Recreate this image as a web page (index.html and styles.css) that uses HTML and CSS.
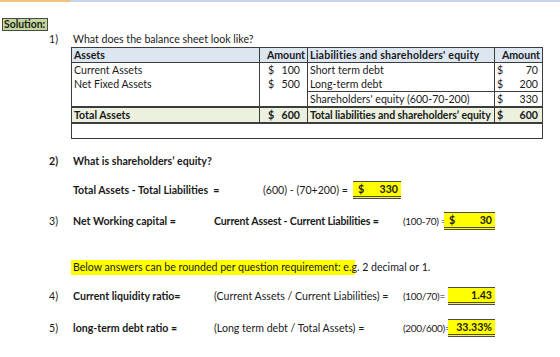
FILE: index.html
```html
<!DOCTYPE html>
<html>
<head>
<meta charset="utf-8">
<link rel="stylesheet" href="styles.css">
</head>
<body>
<div class="topbar"><span class="topbar-tab"></span></div>
<div class="solution">Solution:</div>

<div class="line line-q1">
  <span class="num">1)</span>
  <span>What does the balance sheet look like?</span>
</div>

<table class="bs">
  <colgroup>
    <col class="c-assets"><col class="c-amt1"><col class="c-liab"><col class="c-amt2">
  </colgroup>
  <tr class="head">
    <td>Assets</td>
    <td class="r">Amount</td>
    <td>Liabilities and shareholders' equity</td>
    <td class="r">Amount</td>
  </tr>
  <tr class="body">
    <td>Current Assets</td>
    <td class="amt1"><span>$</span><span>100</span></td>
    <td>Short term debt</td>
    <td class="amt2"><span>$</span><span>70</span></td>
  </tr>
  <tr class="body">
    <td>Net Fixed Assets</td>
    <td class="amt1"><span>$</span><span>500</span></td>
    <td>Long-term debt</td>
    <td class="amt2"><span>$</span><span>200</span></td>
  </tr>
  <tr class="body last">
    <td></td>
    <td class="amt1"></td>
    <td class="boxed">Shareholders' equity (600-70-200)</td>
    <td class="amt2 boxed"><span>$</span><span>330</span></td>
  </tr>
  <tr class="total">
    <td>Total Assets</td>
    <td class="amt1"><span>$</span><span>600</span></td>
    <td class="tot-liab">Total liabilities and shareholders’ equity</td>
    <td class="amt2"><span>$</span><span>600</span></td>
  </tr>
  <tr class="empty">
    <td colspan="4"></td>
  </tr>
</table>

<div class="line line-q2 bold">
  <span class="num">2)</span>
  <span>What is shareholders’ equity?</span>
</div>

<div class="line line-q2b">
  <span class="num"></span>
  <span class="bold w-tl">Total Assets - Total Liabilities &nbsp;=</span>
  <span class="w-calc">(600) - (70+200) =</span>
  <span class="ans ans-330"><span>$</span><span>330</span></span>
</div>

<div class="line line-q3">
  <span class="num">3)</span>
  <span class="bold w-label">Net Working capital =</span>
  <span class="bold w-formula tight">Current Assest - Current Liabilities =</span>
  <span class="w-calc3">(100-70) =</span>
  <span class="ans ans-30"><span>$</span><span>30</span></span>
</div>

<div class="note-row">
  <span class="num"></span>
  <span class="note"><span class="note-text">Below answers can be rounded per question requirement: e.g. 2 decimal or 1.</span></span>
</div>

<div class="line line-q4">
  <span class="num">4)</span>
  <span class="bold w-label">Current liquidity ratio=</span>
  <span class="w-formula">(Current Assets / Current Liabilities) =</span>
  <span class="w-calc4">(100/70)=</span>
  <span class="ans ans-r"><span>1.43</span></span>
</div>

<div class="line line-q5">
  <span class="num">5)</span>
  <span class="bold w-label">long-term debt ratio =</span>
  <span class="w-formula">(Long term debt / Total Assets) =</span>
  <span class="w-calc4">(200/600)=</span>
  <span class="ans ans-r"><span>33.33%</span></span>
</div>
</body>
</html>
```

FILE: styles.css
```css
html, body {
  margin: 0;
  padding: 0;
  background: #ffffff;
}
body {
  width: 560px;
  height: 357px;
  overflow: hidden;
  font-family: "Lato", "Noto Sans", sans-serif;
  font-size: 10.6px;
  color: #1a1a1a;
}
.bold { font-weight: bold; }
.tight { letter-spacing: -0.15px; }

.topbar {
  height: 2px;
  background: #c6d4e6;
  display: flex;
}
.topbar-tab {
  width: 70px;
  background: #f3c27a;
}

.solution {
  display: inline-block;
  margin: 16px 0 0 2px;
  height: 11px;
  line-height: 11px;
  padding: 0 2px 0 1px;
  background: #c4d79b;
  border: 1px solid #4a4a4a;
  font-weight: bold;
  font-size: 10.4px;
  vertical-align: top;
}

.line {
  display: flex;
  align-items: center;
  height: 18px;
  white-space: nowrap;
}
.num {
  width: 24px;
  padding-left: 49px;
  flex: none;
}
.line-q1 { margin-top: 1px; height: 14px; }

/* balance sheet table */
.bs {
  margin: 1px 0 0 71px;
  border-collapse: collapse;
  table-layout: fixed;
  width: 471px;
}
.c-assets { width: 188px; }
.c-amt1 { width: 48px; }
.c-liab { width: 187px; }
.c-amt2 { width: 48px; }
.bs td {
  padding: 0 2px;
  height: 14px;
  line-height: 14px;
  white-space: nowrap;
  border-left: 1px solid #3c3c3c;
  border-right: 1px solid #3c3c3c;
}
.bs .r { text-align: right; }
.bs .head td {
  background: #dce6f1;
  font-weight: bold;
  border: 1px solid #3c3c3c;
}
.bs .head td:nth-child(3) { letter-spacing: 0.2px; }
.bs .amt1 span:first-child { padding-left: 6px; }
.bs .amt1 span:last-child,
.bs .amt2 span:last-child { float: right; }
.bs .amt1 span:last-child { padding-right: 5px; }
.bs .amt2 span:last-child { padding-right: 2px; }
.bs .boxed { border-top: 1px solid #3c3c3c; }
.bs .total td {
  background: #ebf1de;
  font-weight: bold;
  border-top: 2px solid #3c3c3c;
  border-bottom: 2px solid #3c3c3c;
}
.bs .total .tot-liab { letter-spacing: -0.1px; }
.bs .empty td {
  border-bottom: 1px solid #3c3c3c;
}

.line-q2 { margin-top: 13px; }
.line-q2b { margin-top: 11px; }
.w-tl { width: 190px; flex: none; }
.w-calc { width: 90px; flex: none; }

.ans {
  display: flex;
  justify-content: space-between;
  box-sizing: border-box;
  height: 18px;
  line-height: 13px;
  padding: 1px 3px 0 5px;
  background: #ffff00;
  border-top: 1px solid #4a4a4a;
  border-bottom: 3px double #4a4a4a;
  font-weight: bold;
  flex: none;
}
.ans-330 { width: 48px; }
.ans-30 { width: 51px; }
.ans-r { width: 47px; justify-content: flex-end; }

.line-q3 { margin-top: 13px; }
.w-label { width: 141px; flex: none; }
.w-formula { width: 189px; flex: none; }
.w-calc3 {
  width: 41px;
  flex: none;
  font-size: 10px;
  letter-spacing: -0.3px;
}
.w-calc4 {
  width: 45px;
  flex: none;
  font-size: 10px;
  letter-spacing: -0.3px;
}

.note-row {
  display: flex;
  margin-top: 30px;
  height: 15px;
  white-space: nowrap;
}
.note {
  width: 282px;
  height: 15px;
  line-height: 15px;
  background: #ffff00;
  flex: none;
  margin-left: -2px;
  padding-left: 2px;
  overflow: visible;
}

.line-q4 { margin-top: 12px; }
.line-q5 { margin-top: 14px; }
```
